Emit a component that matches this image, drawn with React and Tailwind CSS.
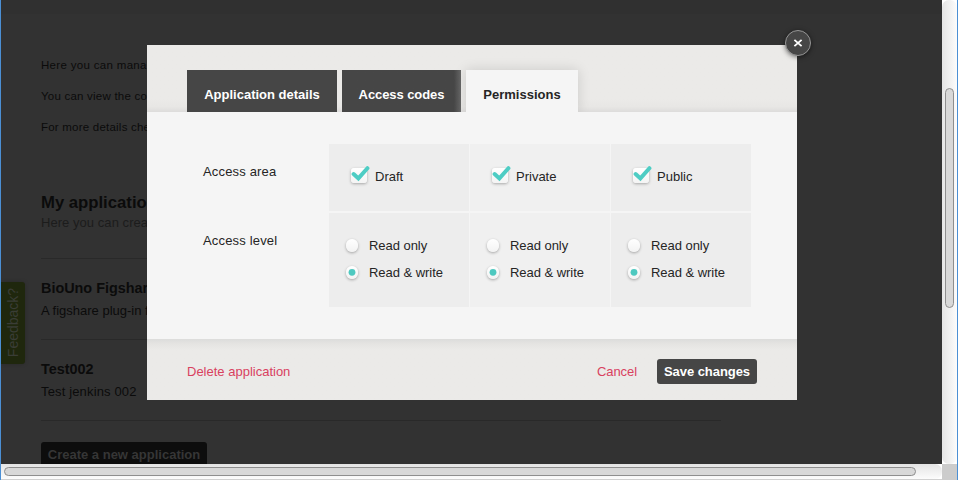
import React from "react";

const AREAS = [
  { name: "Draft", bg: "bg-[#ededed]" },
  { name: "Private", bg: "bg-[#f0f0f0]" },
  { name: "Public", bg: "bg-[#ededed]" },
];

function Check() {
  return (
    <span className="relative block h-[15px] w-[16px] shrink-0 rounded-[3px] bg-gradient-to-b from-white to-[#f4f4f4] shadow-[0_1px_3px_rgba(0,0,0,0.3)]">
      <svg className="absolute -top-[2px] left-0" width="20" height="17" viewBox="0 0 20 17" fill="none">
        <path d="M2.6 8 L7.4 12.4 L16.4 2.2" stroke="#4ecdc4" strokeWidth="4" strokeLinecap="round" strokeLinejoin="miter" />
      </svg>
    </span>
  );
}

function Radio({ label, on }) {
  return (
    <label className="flex h-[27px] items-center">
      <span className="flex h-[13px] w-[12px] shrink-0 items-center justify-center rounded-full bg-gradient-to-b from-white to-[#f3f3f3] shadow-[0_1px_3px_rgba(0,0,0,0.32)]">
        {on && (
          <svg width="12" height="13" viewBox="0 0 12 13">
            <circle cx="6" cy="6.3" r="3.4" fill="#4ec9c0" />
          </svg>
        )}
      </span>
      <span className="ml-[11px] tracking-[-0.04px]">{label}</span>
    </label>
  );
}

function Background() {
  return (
    <div className="h-[464px] w-[941px] overflow-hidden bg-[#323232] pl-10 text-[#0b0b0b]">
      <div className="-ml-10 h-[14px] bg-[#303030]" />
      <div className="mt-[44px] text-[11.5px] leading-[15px] tracking-[0.32px]">
        <p className="mb-4">Here you can manage</p>
        <p className="mb-4 tracking-[0.22px]">You can view the content</p>
        <p className="tracking-[0.22px]">For more details check</p>
      </div>
      <h1 className="mt-[58px] text-[16.7px] leading-5 font-bold">My applications</h1>
      <p className="text-[13px] leading-5 tracking-[0.05px] text-[#1c1c1c]">Here you can create</p>
      <div className="mt-[25px] w-[680px] border-t border-[#292929]">
        <div className="h-[81px] border-b border-[#292929] pt-[19px]">
          <h2 className="text-[14.4px] leading-5 font-bold">BioUno Figshare</h2>
          <p className="mt-[3px] text-[13px] leading-5">A figshare plug-in for</p>
        </div>
        <div className="h-[81px] border-b border-[#292929] pt-[19px]">
          <h2 className="text-[14.4px] leading-5 font-bold">Test002</h2>
          <p className="mt-[3px] text-[13px] leading-5 tracking-[0.15px]">Test jenkins 002</p>
        </div>
      </div>
      <button className="mt-[21px] block h-[26px] w-[166px] rounded-[3px] bg-[#0d0d0d] text-[13px] font-bold text-[#363636]">
        Create a new application
      </button>
    </div>
  );
}

function Dialog() {
  return (
    <div className="absolute top-[45px] left-[147px] flex h-[355px] w-[650px] flex-col bg-[#ebeae8] text-[13px] text-[#252525]">
      <header className="flex h-[67px] items-end gap-[5px] overflow-hidden bg-gradient-to-t from-[#dddcdb] via-[#e8e7e5] via-8% to-[#ebeae8] to-20% pl-10 font-bold">
        <div className="flex h-[42px] w-[150px] items-center justify-center bg-[#464646] pt-[7px] text-white">Application details</div>
        <div className="flex h-[42px] w-[119px] items-center justify-center bg-[#464646] bg-gradient-to-l from-[#686868] to-[#464646] to-6% pt-[7px] tracking-[-0.08px] text-white">Access codes</div>
        <div className="flex h-[42px] w-[112px] items-center justify-center bg-[#f5f5f5] pt-[7px] shadow-[0_0_12px_rgba(0,0,0,0.14)]">Permissions</div>
      </header>
      <main className="flex h-[227px] bg-[#f5f5f5] pt-8 pl-14">
        <div className="w-[126px] leading-5 tracking-[0.17px]">
          <div className="h-[69px] pt-[18px]">Access area</div>
          <div className="pt-[18px]">Access level</div>
        </div>
        <div className="flex gap-px">
          {AREAS.map((area) => (
            <section key={area.name} className="flex w-[140px] flex-col gap-[2px]">
              <label className={`flex h-[67px] items-center pl-[22px] ${area.bg}`}>
                <span className="mt-[-4px]"><Check /></span>
                <span className="ml-2 mt-[-2px]">{area.name}</span>
              </label>
              <div className={`h-[94px] pt-[19px] pl-[17px] ${area.bg}`}>
                <Radio label="Read only" />
                <Radio label="Read & write" on />
              </div>
            </section>
          ))}
        </div>
      </main>
      <footer className="flex h-[61px] items-center bg-gradient-to-b from-[#dcdcdb] via-[#e5e4e2] via-8% to-[#ebeae8] to-18% px-10 pt-1 text-[#d9415f]">
        <a>Delete application</a>
        <a className="ml-auto tracking-[-0.08px]">Cancel</a>
        <button className="ml-5 h-[25px] w-[100px] rounded-[3px] bg-[#464646] font-bold tracking-[-0.05px] text-white">Save changes</button>
      </footer>
      <button aria-label="Close" className="absolute -top-[15px] left-[638px] flex h-[26px] w-[26px] items-center justify-center rounded-full border border-[#969696] bg-[#464646] shadow-[0_1px_5px_rgba(0,0,0,0.55)]">
        <svg width="10" height="10" viewBox="0 0 10 10" fill="none">
          <path d="M1.4 1.8L8.6 8.2M8.6 1.8L1.4 8.2" stroke="white" strokeWidth="1.8" />
        </svg>
      </button>
    </div>
  );
}

export default function App() {
  return (
    <div className="relative flex h-[480px] w-[958px] overflow-hidden border-r border-l border-[#4b8fd4] bg-white font-['Liberation_Sans',Arial,sans-serif] whitespace-nowrap">
      <div className="w-[941px] shrink-0">
        <Background />
        <div className="h-4 border-b border-[#d0d0d0] bg-white">
          <div className="h-[15px] rounded-r-[7px] bg-gradient-to-b from-[#e4e4e4] to-[#fcfcfc] pt-[3px] pl-[3px]">
            <div className="h-[9px] w-[912px] rounded-full border border-[#8e8e8e] bg-[#d8d8d8]" />
          </div>
        </div>
      </div>
      <div className="w-[15px] shrink-0">
        <div className="h-[464px] rounded-[7px] bg-gradient-to-r from-[#e4e4e4] to-[#fcfcfc] pt-[88px] pl-[3px]">
          <div className="h-[220px] w-[9px] rounded-full border border-[#8e8e8e] bg-[#d8d8d8]" />
        </div>
        <div className="h-4 bg-[#cccccc]" />
      </div>
      <div className="absolute top-[282px] left-0 flex h-[82px] w-6 items-center justify-center rounded-r-[3px] bg-[#1f270d] pb-0.5 pl-0.5 shadow-[0_0_4px_rgba(0,0,0,0.2)]">
        <span className="-rotate-90 text-[14px] text-[#3a3d36]">Feedback?</span>
      </div>
      <div className="absolute top-0 -left-px"><Dialog /></div>
    </div>
  );
}
